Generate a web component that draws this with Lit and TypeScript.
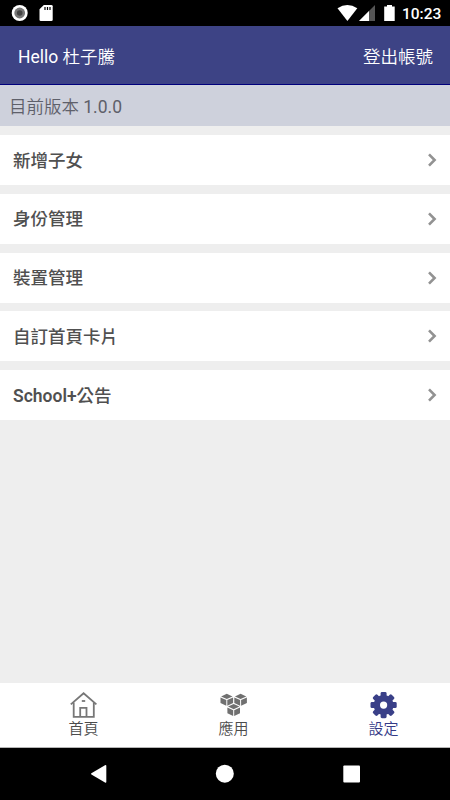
import { LitElement, html, svg, css } from "lit";
import { customElement } from "lit/decorators.js";

const cube = (x: number, y: number) => svg`<g transform="translate(${x} ${y})">
  <path d="M0.6 2.6 6.3 0 12 2.6 6.3 5.2Z" />
  <path d="M0 3.6 5.8 6.2V12L0 9.3Z" />
  <path d="M12.6 3.6 6.8 6.2V12L12.6 9.3Z" />
</g>`;

const homeIcon = html`<svg width="28" height="27" viewBox="0 0 28 27" fill="none" stroke="#777" stroke-width="1.8">
  <path d="M0.8 12.4 13.6 1.2 26.4 12.4" />
  <path d="M3.7 10.4V24.8H23.8V10.4" />
  <path d="M10.2 24.5V15.8H16.5V24.5" />
  <path d="M11.8 9H15.2" />
</svg>`;

const appsIcon = html`<svg width="28" height="27" viewBox="0 0 28 27" fill="#707070">
  ${cube(0.5, 1.8)}${cube(14.3, 1.8)}${cube(7.4, 12)}
</svg>`;

const gearIcon = html`<svg width="28" height="27" viewBox="-13.6 -13.1 28 27">
  <g fill="#3a4088">
    ${[0, 45, 90, 135].map((a) => svg`<rect x="-3" y="-13.1" width="6" height="26.2" rx="1.4" transform="rotate(${a})" />`)}
    <circle r="10" />
  </g>
  <circle r="3.6" fill="#fff" />
</svg>`;

@customElement("app-root")
export class AppRoot extends LitElement {
  static styles = css`
    :host {
      display: flex;
      flex-direction: column;
      width: 450px;
      height: 800px;
      overflow: hidden;
      background: #eee;
      font-family: Roboto, "Noto Sans CJK TC", sans-serif;
      font-size: 17.5px;
    }
    svg { display: block; }
    .status {
      height: 26px;
      flex: none;
      background: #000;
      display: flex;
      justify-content: space-between;
    }
    .clock {
      color: #fff;
      font-size: 15.5px;
      font-weight: 500;
      line-height: 28px;
      width: 48px;
    }
    .right { display: flex; }
    .header {
      height: 58px;
      flex: none;
      background: #3d4385;
      border-bottom: 1px solid #00007c;
      color: #fff;
      display: flex;
      justify-content: space-between;
      padding: 0 17px 0 18px;
      line-height: 62px;
      font-weight: 350;
    }
    .version {
      height: 41px;
      flex: none;
      line-height: 44px;
      padding-left: 9px;
      background: #ced1dc;
      color: #5e606a;
      box-sizing: border-box;
      font-weight: 350;
    }
    .regular { font-weight: 400; }
    .rows {
      display: flex;
      flex-direction: column;
      gap: 8.75px;
      padding-top: 9px;
      flex: 1;
    }
    .row {
      height: 50px;
      background: #fff;
      display: flex;
      align-items: center;
      justify-content: space-between;
      padding: 0 12px 0 13px;
      color: #505050;
      font-weight: 500;
    }
    .label { padding-bottom: 2px; }
    .latin { font-weight: 600; }
    .tabs {
      height: 64px;
      flex: none;
      background: #fff;
      border-bottom: 1px solid #b5b5b5;
      display: grid;
      grid-template-columns: repeat(3, 1fr);
    }
    .tab {
      display: flex;
      flex-direction: column;
      align-items: center;
      padding: 9px 0 0 17px;
      font-size: 15px;
      font-weight: 350;
      line-height: 20px;
      color: #4c4c4c;
    }
    .tab.active { color: #343a87; }
    .nav { flex: none; height: 52px; background: #000; }
  `;

  render() {
    const rows = [
      html`新增子女`,
      html`身份管理`,
      html`裝置管理`,
      html`自訂首頁卡片`,
      html`<span class="latin">School+</span>公告`,
    ];
    return html`
      <div class="status">
        <svg width="60" height="26" viewBox="0 0 60 26">
          <circle cx="19.7" cy="13" r="8" fill="#fff" />
          <circle cx="19.7" cy="13" r="5.4" fill="#777" />
          <circle cx="19.7" cy="13" r="2.8" fill="#444" />
          <path d="M43.8 5H51.4Q52.7 5 52.7 6.3V19.7Q52.7 21 51.4 21H40.8Q39.5 21 39.5 19.7V9.3Z" fill="#fff" />
          <path d="M45 7V10M47.5 7V10M50 7V10" stroke="#000" stroke-width="1.2" />
        </svg>
        <div class="right">
          <svg width="66" height="26" viewBox="336 0 66 26">
            <path d="M337.5 8.3Q347.4 1.7 357.3 8.3L347.4 21Z" fill="#fff" />
            <path d="M359 21 375 5V21Z" fill="#555" />
            <path d="M359 21 369 11V21Z" fill="#fff" />
            <path d="M387 5H392V6.5H394.7V21H384.2V6.5H387Z" fill="#fff" />
          </svg>
          <span class="clock">10:23</span>
        </div>
      </div>
      <div class="header">
        <span><span class="regular">Hello</span> 杜子騰</span><span>登出帳號</span>
      </div>
      <div class="version">目前版本 <span class="regular">1.0.0</span></div>
      <div class="rows">
        ${rows.map(
          (label) => html`<div class="row">
            <span class="label">${label}</span>
            <svg width="12" height="14" viewBox="0 0 12 14" fill="none" stroke="#929292" stroke-width="2.6">
              <path d="M3 1.4 8.6 7 3 12.6" />
            </svg>
          </div>`
        )}
      </div>
      <div class="tabs">
        <div class="tab">${homeIcon}<span>首頁</span></div>
        <div class="tab">${appsIcon}<span>應用</span></div>
        <div class="tab active">${gearIcon}<span>設定</span></div>
      </div>
      <div class="nav">
        <svg width="450" height="52" viewBox="0 748 450 52" fill="#fff">
          <path d="M91.4 773.2Q90.6 773.8 91.4 774.5L105 782.6Q106.3 783.2 106.3 782V765.8Q106.3 764.6 105 765.2Z" />
          <circle cx="224.8" cy="773.7" r="9" />
          <rect x="343.3" y="765.4" width="16.7" height="17" rx="1" />
        </svg>
      </div>
    `;
  }
}
